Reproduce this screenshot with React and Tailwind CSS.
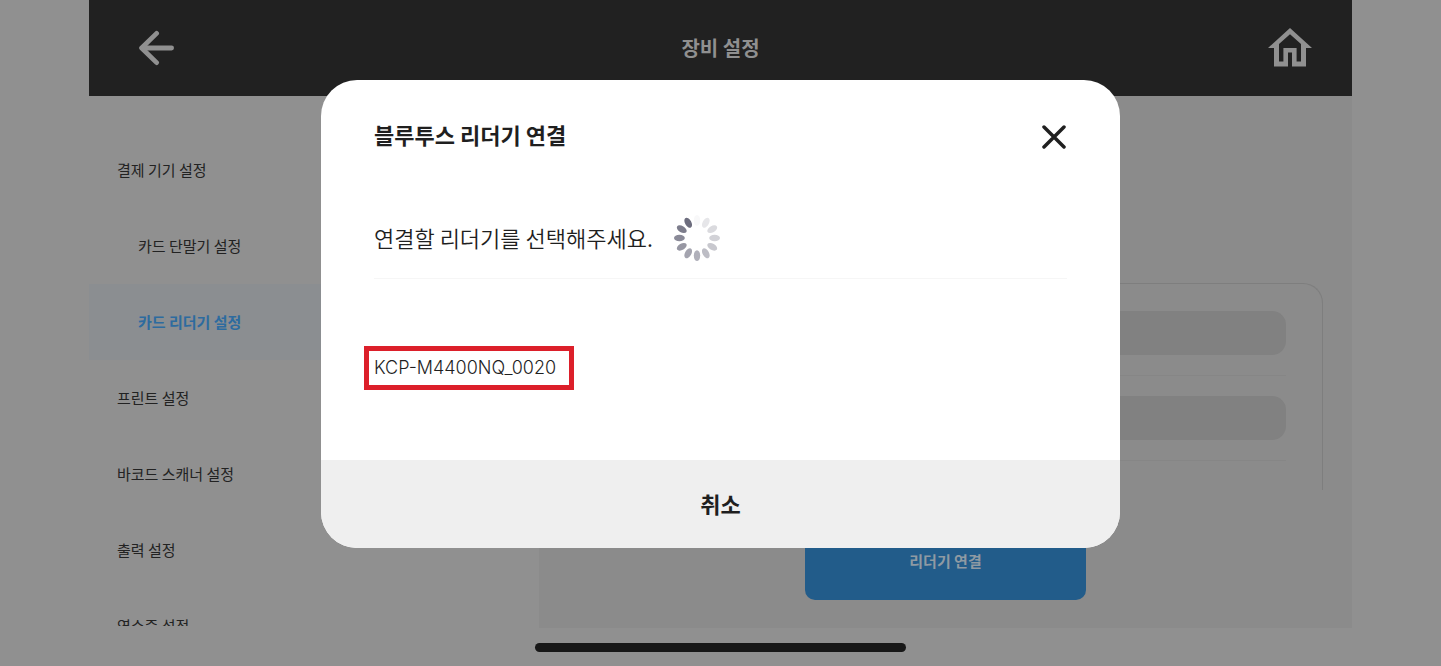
const MENU = [
  { label: "결제 기기 설정" },
  { label: "카드 단말기 설정", nested: true },
  { label: "카드 리더기 설정", nested: true, active: true },
  { label: "프린트 설정" },
  { label: "바코드 스캐너 설정" },
  { label: "출력 설정" },
  { label: "영수증 설정" },
];

const PETALS = [
  "#f8f8f9",
  "#e6e6e9",
  "#dadade",
  "#d2d2d7",
  "#c8c8ce",
  "#bdbdc5",
  "#b0b0ba",
  "#a4a4af",
  "#9797a3",
  "#8a8a98",
  "#7d7d8c",
  "#6d6d7e",
];

function BackIcon() {
  return (
    <svg width="36" height="36" viewBox="0 0 36 36" fill="none" stroke="currentColor" strokeWidth="4.8" strokeLinecap="round" strokeLinejoin="round" aria-hidden="true">
      <path d="M17.6 3.4 2.6 18l15 14.6" />
      <path d="M4 18h28.6" />
    </svg>
  );
}

function HomeIcon() {
  return (
    <svg width="44" height="40" viewBox="0 0 44 40" fill="currentColor" fillRule="evenodd" aria-hidden="true">
      <path d="M22 0 44 20h-6v18.4H24V24.6h-4v13.8H6V20H0L22 0Zm0 6.2L11 16v17.4h4.4V20h13.2v13.4H33V16L22 6.2Z" />
    </svg>
  );
}

function CloseIcon() {
  return (
    <svg width="26" height="26" viewBox="0 0 26 26" fill="none" stroke="currentColor" strokeWidth="3.5" strokeLinecap="round" aria-hidden="true">
      <path d="m3 4 20 20M23 4l-20 20" />
    </svg>
  );
}

function Spinner() {
  return (
    <svg width="48" height="48" viewBox="-24 -24 48 48" role="img" aria-label="검색 중">
      {PETALS.map((color, i) => (
        <ellipse key={color} cx="0" cy="-17.6" rx="3.2" ry="5.4" fill={color} transform={`rotate(${i * 30})`} />
      ))}
    </svg>
  );
}

function Sidebar() {
  return (
    <nav className="mb-0.5 w-[450px] shrink-0 overflow-hidden pt-9">
      <ul>
        {MENU.map(({ label, nested, active }) => (
          <li key={label}>
            <a
              href="#"
              aria-current={active ? "page" : undefined}
              className={`flex h-[76px] items-center text-[15px] ${nested ? "pl-[49px]" : "pl-7"} ${
                active ? "bg-[#8b8e91] font-bold text-[#2d6b9f]" : "text-[#222222]"
              }`}
            >
              {label}
            </a>
          </li>
        ))}
      </ul>
    </nav>
  );
}

function ReaderPanel() {
  return (
    <main className="flex flex-1 flex-col bg-[#8b8b8b] px-[29px] pt-[187px] pb-7">
      <section className="h-[207px] shrink-0 rounded-t-[20px] border border-b-0 border-[#7e7e7e] px-9 pt-[27px]">
        {["리더기 이름", "리더기 번호"].map((name) => (
          <div key={name} className="mb-5 border-b border-[#868686] pb-5">
            <input
              aria-label={name}
              readOnly
              className="block h-11 w-full rounded-[14px] bg-[#818181] px-4 text-base outline-none"
            />
          </div>
        ))}
      </section>
      <button type="button" className="mx-auto mt-[34px] h-[76px] w-[281px] shrink-0 rounded-[10px] bg-[#225c8a] pb-0.5 text-[15px] font-bold text-[#8f9aa3]">
        리더기 연결
      </button>
    </main>
  );
}

function ConnectDialog() {
  return (
    <div
      role="dialog"
      aria-modal="true"
      aria-labelledby="dialog-title"
      className="w-full max-w-[799px] overflow-hidden rounded-[36px] bg-white text-[#1f1f1f]"
    >
      <div className="flex h-[380px] flex-col px-[53px] pt-10">
        <div className="flex h-8 items-center justify-between">
          <h2 id="dialog-title" className="pb-1 text-[22px] leading-8 font-bold">
            블루투스 리더기 연결
          </h2>
          <button type="button" aria-label="닫기">
            <CloseIcon />
          </button>
        </div>
        <div className="mt-[62px] flex h-[65px] items-start gap-5 border-b border-[#f6f6f6]">
          <p className="text-[22px] leading-[46px] font-[350]">연결할 리더기를 선택해주세요.</p>
          <Spinner />
        </div>
        <ul className="-mx-2.5 mt-[67px]">
          <li>
            <button
              type="button"
              className="flex h-11 w-[210px] items-center border-5 border-[#dc1f2a] pl-[5px] font-['Inter'] text-lg font-[350]"
            >
              KCP-M4400NQ_0020
            </button>
          </li>
        </ul>
      </div>
      <button type="button" className="h-22 w-full bg-[#efefef] pb-0.5 text-[22px] font-bold">
        취소
      </button>
    </div>
  );
}

export default function App() {
  return (
    <div className="relative flex h-screen flex-col bg-[#909090] px-[89px] font-['Noto_Sans_CJK_KR',sans-serif]">
      <header className="grid h-24 shrink-0 grid-cols-[1fr_auto_1fr] items-center bg-[#212121] px-10 text-[#909090]">
        <button type="button" aria-label="뒤로" className="ml-2.5 justify-self-start">
          <BackIcon />
        </button>
        <h1 className="text-xl font-bold">장비 설정</h1>
        <button type="button" aria-label="홈" className="justify-self-end">
          <HomeIcon />
        </button>
      </header>
      <div className="flex min-h-0 flex-1">
        <Sidebar />
        <ReaderPanel />
      </div>
      <footer className="flex h-[38px] shrink-0 items-center justify-center">
        <div className="h-[9px] w-[371px] rounded-full bg-[#181818]" />
      </footer>
      <div className="absolute inset-0 flex items-start justify-center px-6 pt-20">
        <ConnectDialog />
      </div>
    </div>
  );
}
